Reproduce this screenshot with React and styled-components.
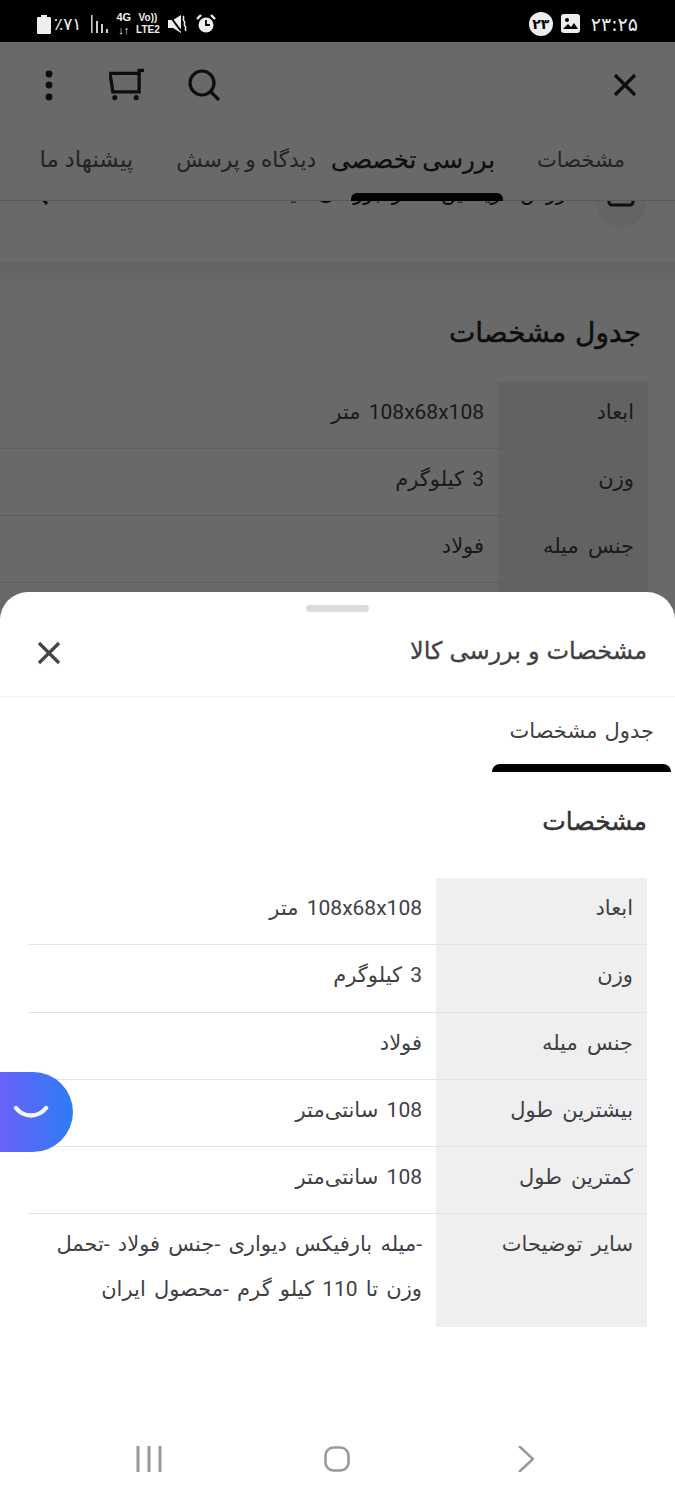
import React from "react";
import styled, { createGlobalStyle } from "styled-components";

const Global = createGlobalStyle`
  html, body { margin: 0; padding: 0; background: #fff; }
  * { box-sizing: border-box; }
  body { font-family: Roboto, "DejaVu Sans", "Noto Sans", sans-serif; }
`;

const Screen = styled.div`
  position: relative;
  width: 675px;
  height: 1500px;
  overflow: hidden;
  background: #fff;
`;

const StatusBar = styled.div`
  position: relative;
  z-index: 3;
  height: 42px;
  background: #000;
  color: #eee;
  display: flex;
  align-items: center;
  justify-content: space-between;
  padding: 5px 37px 0 37px;
`;

const StatusGroup = styled.div`
  display: flex;
  align-items: center;
  gap: ${(p) => p.$gap || 8}px;
`;

const StatusText = styled.span`
  margin-left: ${(p) => p.$left || 0}px;
  font-size: ${(p) => p.$size || 15}px;
  font-family: "DejaVu Sans", sans-serif;
`;

const NetText = styled.div`
  margin-left: ${(p) => p.$left || 0}px;
  font-family: "Liberation Sans", sans-serif;
  font-size: ${(p) => p.$size || 11}px;
  line-height: ${(p) => p.$size + 2}px;
  font-weight: 700;
  text-align: center;
`;

const StatusIcon = styled.svg`
  flex: none;
  margin-left: ${(p) => p.$left || 0}px;
`;

const Badge = styled.div`
  width: 24px;
  height: 24px;
  border-radius: 50%;
  background: #eee;
  color: #000;
  font-size: 14px;
  font-weight: 700;
  font-family: "DejaVu Sans", sans-serif;
  display: flex;
  align-items: center;
  justify-content: center;
`;

const Header = styled.header`
  height: 86px;
  display: flex;
  align-items: center;
  justify-content: space-between;
  padding: 0 38px 0 33px;
`;

const HeaderActions = styled.div`
  display: flex;
  align-items: center;
  gap: 44px;
`;

const Tabs = styled.nav`
  position: relative;
  z-index: 1;
  height: 73px;
  direction: rtl;
  display: flex;
  align-items: flex-start;
  padding: 16px 50px 0 0;
  background: #fff;
  border-bottom: 1px solid #d8d8d8;
`;

const Tab = styled.div`
  position: relative;
  margin-right: ${(p) => p.$gap || 0}px;
  font-size: ${(p) => p.$size || 21}px;
  line-height: 32px;
  white-space: nowrap;
  color: ${(p) => (p.$active ? "#222" : "#555")};
  -webkit-text-stroke: ${(p) => (p.$active ? "0.25px #222" : "0")};
  &::after {
    content: "";
    display: ${(p) => (p.$active ? "block" : "none")};
    position: absolute;
    top: 49px;
    right: -8px;
    width: 152px;
    height: 8px;
    border-radius: 6px 6px 0 0;
    background: #000;
  }
`;

const ClippedRow = styled.div`
  height: 84px;
  margin-top: -23px;
  direction: rtl;
  display: flex;
  align-items: flex-start;
  padding: 0 29px 0 37px;
  gap: 24px;
  color: #222;
`;

const RoundIcon = styled.div`
  width: 50px;
  height: 50px;
  flex: none;
  border-radius: 50%;
  background: #f2f2f2;
  display: flex;
  align-items: center;
  justify-content: center;
`;

const ClippedText = styled.div`
  font-size: 21px;
  line-height: 30px;
  white-space: nowrap;
`;

const ClippedChevron = styled.div`
  margin-right: auto;
  margin-top: 5px;
  line-height: 0;
`;

const SectionGap = styled.div`
  height: 20px;
  background: linear-gradient(#f2f2f2, #fafafa);
`;

const BackSection = styled.section`
  direction: rtl;
  padding: 33px 27px 0 0;
`;

const SectionTitle = styled.h2`
  margin: 0 ${(p) => p.$inset || 0}px 0 0;
  font-size: ${(p) => p.$size}px;
  line-height: 36px;
  font-weight: 400;
  word-spacing: 2px;
  color: ${(p) => p.$color || "#222"};
  -webkit-text-stroke: 0.45px ${(p) => p.$color || "#222"};
`;

const SpecTable = styled.div`
  margin-top: ${(p) => p.$top}px;
  width: ${(p) => p.$width}px;
`;

const SpecRow = styled.div`
  display: flex;
  min-height: ${(p) => p.$height || 67}px;
  border-bottom: ${(p) => (p.$last ? "none" : "1px solid #e4e4e4")};
`;

const SpecKey = styled.div`
  flex: none;
  width: ${(p) => p.$width}px;
  background: #efeff0;
  padding: 14px 14px 0 0;
  font-size: 21px;
  line-height: 32px;
  word-spacing: 4px;
  color: #3f3f46;
`;

const SpecValue = styled.div`
  flex: 1;
  padding: 8px 14px 0 26px;
  font-size: 21px;
  line-height: 45px;
  word-spacing: 3px;
  color: #3f3f46;
`;

const Overlay = styled.div`
  position: absolute;
  inset: 0;
  z-index: 1;
  background: rgba(0, 0, 0, 0.59);
`;

const Sheet = styled.div`
  position: absolute;
  z-index: 2;
  left: 0;
  right: 0;
  top: 592px;
  bottom: 0;
  background: #fff;
  border-radius: 28px 28px 0 0;
  display: flex;
  flex-direction: column;
`;

const Handle = styled.div`
  width: 63px;
  height: 7px;
  margin: 13px auto 0;
  border-radius: 4px;
  background: #dcdcdc;
`;

const SheetHeader = styled.div`
  height: 85px;
  direction: rtl;
  display: flex;
  align-items: center;
  justify-content: space-between;
  padding: 0 28px 6px 37px;
  border-bottom: 1px solid #f2f2f2;
`;

const SheetTitle = styled.div`
  font-size: 24px;
  word-spacing: 1px;
  color: #3f3f46;
  -webkit-text-stroke: 0.3px #3f3f46;
`;

const SheetClose = styled.div`
  margin-top: 4px;
  line-height: 0;
`;

const SheetTabs = styled.div`
  height: 75px;
  direction: rtl;
  padding: 18px 4px 0 0;
`;

const SheetTab = styled.div`
  position: relative;
  width: 179px;
  height: 57px;
  text-align: right;
  padding: 2px 17px 0 0;
  font-size: 21px;
  line-height: 28px;
  word-spacing: 2px;
  color: #3f3f46;
  &::after {
    content: "";
    position: absolute;
    left: 0;
    right: 0;
    bottom: 0;
    height: 8px;
    border-radius: 8px 8px 0 0;
    background: #000;
  }
`;

const SheetBody = styled.div`
  direction: rtl;
  padding: 32px 28px 0;
`;

const FloatButton = styled.div`
  position: absolute;
  z-index: 4;
  left: 0;
  top: 1072px;
  width: 73px;
  height: 80px;
  border-radius: 0 40px 40px 0;
  background: linear-gradient(90deg, #6a62f8, #2d7cf6);
  display: flex;
  align-items: center;
  justify-content: center;
  padding-right: 12px;
`;

const NavBar = styled.div`
  position: absolute;
  z-index: 3;
  left: 136px;
  right: 141px;
  bottom: 28px;
  display: flex;
  align-items: center;
  justify-content: space-between;
`;

const Close = ({ size = 24, color = "#333", width = 3.2 }) => (
  <svg width={size} height={size} viewBox="0 0 24 24" fill="none" stroke={color} strokeWidth={width}>
    <path d="M2 2 22 22M22 2 2 22" />
  </svg>
);

const rowsBack = [
  ["ابعاد", "108x68x108 متر"],
  ["وزن", "3 کیلوگرم"],
  ["جنس میله", "فولاد"],
  ["بیشترین طول", "108 سانتی‌متر"],
];

const rowsSheet = [
  ["ابعاد", "108x68x108 متر", 67],
  ["وزن", "3 کیلوگرم", 68],
  ["جنس میله", "فولاد", 67],
  ["بیشترین طول", "108 سانتی‌متر", 67],
  ["کمترین طول", "108 سانتی‌متر", 67],
  ["سایر توضیحات", "-میله بارفیکس دیواری -جنس فولاد -تحمل وزن تا 110 کیلو گرم -محصول ایران", 113],
];

export default function App() {
  return (
    <Screen>
      <Global />
      <StatusBar>
        <StatusGroup $gap={3}>
          <StatusIcon width="14" height="20" viewBox="0 0 14 20" fill="#eee">
            <path d="M4 1h6v2h3a1 1 0 0 1 1 1v15a1 1 0 0 1-1 1H1a1 1 0 0 1-1-1V4a1 1 0 0 1 1-1h3z" />
          </StatusIcon>
          <StatusText $size={17}>٪۷۱</StatusText>
          <StatusIcon $left={7} width="18" height="20" viewBox="0 0 18 20" fill="#ccc">
            <rect x="0" y="1" width="1.6" height="18" />
            <rect x="5" y="7" width="2" height="12" />
            <rect x="10" y="10" width="2" height="9" />
            <rect x="15" y="15" width="2" height="4" />
          </StatusIcon>
          <NetText $size={11} $left={4}>4G<br />↓↑</NetText>
          <NetText $size={10} $left={2}>Vo))<br />LTE2</NetText>
          <StatusIcon $left={5} width="20" height="20" viewBox="0 0 20 20" fill="#eee">
            <path d="M0 6h5l8-5v18l-8-5H0z" />
            <path d="M1 1 13 17" stroke="#000" strokeWidth="2" />
            <path d="M15 2c2 2-1 3 1 5s-1 3 1 5-1 3 1 5" stroke="#eee" strokeWidth="1.6" fill="none" />
          </StatusIcon>
          <StatusIcon $left={5} width="20" height="20" viewBox="0 0 20 20">
            <circle cx="10" cy="11" r="7.5" fill="#eee" />
            <path d="M10 6v5h4" stroke="#000" strokeWidth="1.8" fill="none" />
            <path d="M1 5 5 1M19 5l-4-4" stroke="#eee" strokeWidth="2.4" />
          </StatusIcon>
        </StatusGroup>
        <StatusGroup $gap={8}>
          <Badge>۲۳</Badge>
          <StatusIcon width="19" height="19" viewBox="0 0 19 19">
            <rect width="19" height="19" rx="3" fill="#eee" />
            <circle cx="6" cy="6" r="2" fill="#000" />
            <path d="M2 15l5-5 3 3 3-4 4 6z" fill="#000" />
          </StatusIcon>
          <StatusText $size={19} $left={3}>۲۳:۲۵</StatusText>
        </StatusGroup>
      </StatusBar>

      <Header>
        <HeaderActions>
          <svg width="32" height="32" viewBox="0 0 32 32" fill="#222">
            <circle cx="16" cy="5" r="3.4" />
            <circle cx="16" cy="16" r="3.4" />
            <circle cx="16" cy="28" r="3.4" />
          </svg>
          <svg width="35" height="34" viewBox="0 0 36 34" fill="none" stroke="#222" strokeWidth="3.4">
            <path d="M1 5h30V24H4zM31 5V2h5" />
            <circle cx="6" cy="30" r="2.6" fill="#222" stroke="none" />
            <circle cx="28" cy="30" r="2.6" fill="#222" stroke="none" />
          </svg>
          <svg width="32" height="32" viewBox="0 0 32 32" fill="none" stroke="#222" strokeWidth="3.2">
            <circle cx="14" cy="14" r="12" />
            <path d="M23 23l8 8" />
          </svg>
        </HeaderActions>
        <Close size={24} color="#222" />
      </Header>

      <Tabs>
        <Tab>مشخصات</Tab>
        <Tab $active $gap={42} $size={24.4}>بررسی تخصصی</Tab>
        <Tab $gap={15} $size={21.6}>دیدگاه و پرسش</Tab>
        <Tab $gap={43} $size={23}>پیشنهاد ما</Tab>
      </Tabs>

      <ClippedRow>
        <RoundIcon>
          <svg width="28" height="8" viewBox="0 0 28 8" fill="none" stroke="#222" strokeWidth="3">
            <path d="M2 0v3a3 3 0 0 0 3 3h18a3 3 0 0 0 3-3V0" />
          </svg>
        </RoundIcon>
        <ClippedText>ارزش خرید این کالا را بررسی کنید</ClippedText>
        <ClippedChevron>
          <svg width="11" height="24" viewBox="0 0 11 24" fill="none" stroke="#222" strokeWidth="3">
            <path d="M10 3 2 12l8 9" />
          </svg>
        </ClippedChevron>
      </ClippedRow>
      <SectionGap />

      <BackSection>
        <SectionTitle $size={28} $inset={7}>جدول مشخصات</SectionTitle>
        <SpecTable $top={31} $width={675}>
          {rowsBack.map(([k, v]) => (
            <SpecRow key={k}>
              <SpecKey $width={150}>{k}</SpecKey>
              <SpecValue>{v}</SpecValue>
            </SpecRow>
          ))}
        </SpecTable>
      </BackSection>

      <Overlay />

      <Sheet>
        <Handle />
        <SheetHeader>
          <SheetTitle>مشخصات و بررسی کالا</SheetTitle>
          <SheetClose>
            <Close size={24} color="#444" />
          </SheetClose>
        </SheetHeader>
        <SheetTabs>
          <SheetTab>جدول مشخصات</SheetTab>
        </SheetTabs>
        <SheetBody>
          <SectionTitle $size={25} $color="#333">مشخصات</SectionTitle>
          <SpecTable $top={38} $width={619}>
            {rowsSheet.map(([k, v, h], i) => (
              <SpecRow key={k} $last={i === rowsSheet.length - 1} $height={h}>
                <SpecKey $width={211}>{k}</SpecKey>
                <SpecValue>{v}</SpecValue>
              </SpecRow>
            ))}
          </SpecTable>
        </SheetBody>
      </Sheet>

      <FloatButton>
        <svg width="36" height="14" viewBox="0 0 36 14" fill="none" stroke="#f4f4ff" strokeWidth="4.4" strokeLinecap="round">
          <path d="M3 3c8 10 22 10 30 0" />
        </svg>
      </FloatButton>

      <NavBar>
        <svg width="26" height="26" viewBox="0 0 26 26" stroke="#999" strokeWidth="3">
          <path d="M2 0v26M13 0v26M24 0v26" />
        </svg>
        <svg width="26" height="26" viewBox="0 0 26 26" fill="none" stroke="#999" strokeWidth="2.6">
          <rect x="1.5" y="1.5" width="23" height="23" rx="8" />
        </svg>
        <svg width="22" height="26" viewBox="0 0 22 26" fill="none" stroke="#999" strokeWidth="2.6">
          <path d="M7 0l14 13L7 26" />
        </svg>
      </NavBar>
    </Screen>
  );
}
